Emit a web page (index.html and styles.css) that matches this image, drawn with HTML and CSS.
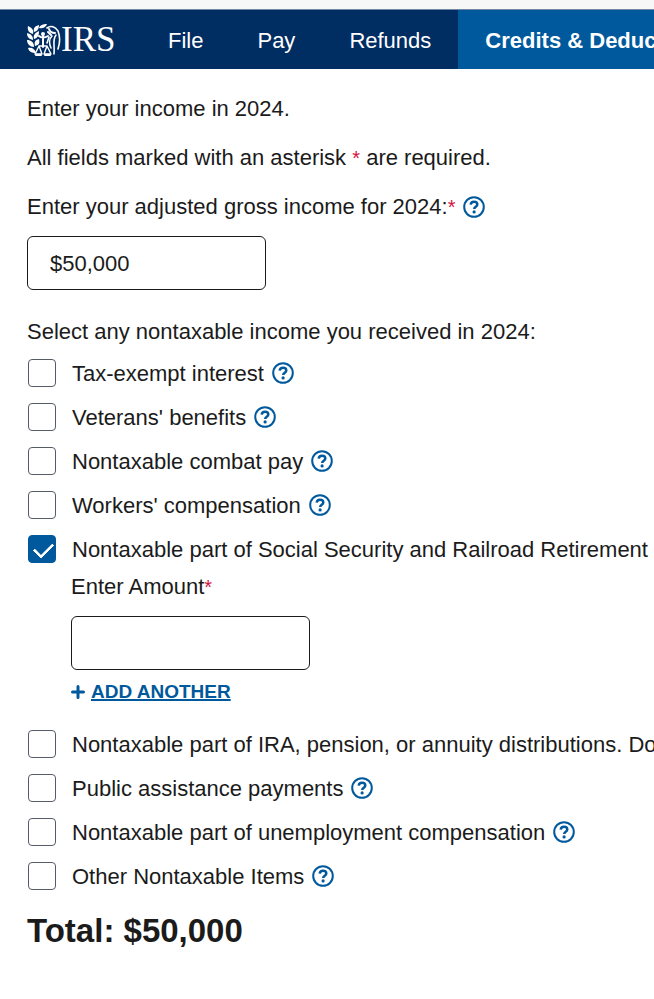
FILE: index.html
```
<!DOCTYPE html>
<html lang="en">
<head>
    <meta charset="UTF-8">
    <meta name="viewport" content="width=device-width, initial-scale=1.0">
    <title>Nontaxable income</title>
    <link rel="stylesheet" href="styles.css">
</head>
<body>
    <svg class="symbols" aria-hidden="true">
        <symbol id="help" viewBox="0 0 22 22">
            <circle cx="11" cy="11" r="9.8" fill="none" stroke="currentColor" stroke-width="2"/>
            <path d="M7.7 8.7C7.9 6.8 9.2 5.8 11 5.8c1.9 0 3.3 1 3.3 2.7 0 2.2-3.1 2.2-3.1 4.4" fill="none" stroke="currentColor" stroke-width="2.5"/>
            <circle cx="11.1" cy="15.9" r="1.6" fill="currentColor"/>
        </symbol>
    </svg>

    <nav class="navbar">
        <a class="logo" href="#" aria-label="IRS">
            <svg class="eagle" viewBox="0 0 34 32" fill="none" stroke="currentColor" stroke-linecap="round" stroke-linejoin="round">
                <!-- olive branch -->
                <g fill="currentColor" stroke="none">
                    <path d="M1 2c4 2 6 4 5 8C2 9 0 6 1 2z"/>
                    <path d="M0 9c4 1 6 3 6 7-4-1-6-3-6-7z"/>
                    <path d="M0 16c4 0 7 2 7 7-4 0-7-3-7-7z"/>
                    <path d="M1 24c4-1 7 1 8 5-4 0-7-1-8-5z"/>
                    <path d="M7 8c-1-4 1-6 5-7 0 3-1 6-5 7z"/>
                    <path d="M7 15c-1-4 1-6 5-8 0 4-1 7-5 8z"/>
                    <path d="M8 22c-1-4 0-6 4-7 1 4 0 6-4 7z"/>
                    <path d="M12 4c1-3 4-4 8-4-1 3-4 5-8 4z"/>
                </g>
                <!-- scales -->
                <path d="M16 11v12M12 12c2 2 6 2 9 0" stroke-width="2"/>
                <circle cx="16" cy="10" r="2" fill="currentColor" stroke="none"/>
                <path d="M12 22l-4 8h7l-3-8h8l-3 8h7l-4-8" stroke-width="1.4"/>
                <path d="M9 31h5M18 31h5" stroke-width="2"/>
                <!-- eagle head and wing -->
                <path d="M20 4c4-3 8-1 11 3 2 5 2 12 0 18" stroke-width="1.6"/>
                <path d="M22 5c1 3 3 4 6 4M21 8l3 3" stroke-width="2"/>
                <path d="M25 12c-3 3-3 8-1 12M29 11c-4 5-1 10-2 19M22 13l-2 6" stroke-width="1.6"/>
            </svg>
            <span class="logo-text">IRS</span>
        </a>
        <a class="nav-link" href="#">File</a>
        <a class="nav-link" href="#">Pay</a>
        <a class="nav-link" href="#">Refunds</a>
        <a class="nav-link active" href="#">Credits &amp; Deductions</a>
    </nav>

    <main class="content">
        <p class="text">Enter your income in 2024.</p>
        <p class="text">All fields marked with an asterisk <span class="required">*</span> are required.</p>

        <div class="field">
            <div class="field-label">
                <label for="agi">Enter your adjusted gross income for 2024:<span class="required">*</span></label>
                <button class="help" type="button" aria-label="Help"><svg><use href="#help"/></svg></button>
            </div>
            <input class="text-input" type="text" id="agi" value="$50,000">
        </div>

        <fieldset class="income">
            <legend>Select any nontaxable income you received in 2024:</legend>
            <div class="option">
                <input type="checkbox" id="interest">
                <label for="interest">Tax-exempt interest</label>
                <button class="help" type="button" aria-label="Help"><svg><use href="#help"/></svg></button>
            </div>
            <div class="option">
                <input type="checkbox" id="veterans">
                <label for="veterans">Veterans' benefits</label>
                <button class="help" type="button" aria-label="Help"><svg><use href="#help"/></svg></button>
            </div>
            <div class="option">
                <input type="checkbox" id="combat">
                <label for="combat">Nontaxable combat pay</label>
                <button class="help" type="button" aria-label="Help"><svg><use href="#help"/></svg></button>
            </div>
            <div class="option">
                <input type="checkbox" id="workers">
                <label for="workers">Workers' compensation</label>
                <button class="help" type="button" aria-label="Help"><svg><use href="#help"/></svg></button>
            </div>
            <div class="option">
                <input type="checkbox" id="social" checked>
                <label for="social">Nontaxable part of Social Security and Railroad Retirement benefits</label>
            </div>
            <div class="amount">
                <label for="amount">Enter Amount<span class="required">*</span></label>
                <input class="text-input" type="text" id="amount">
                <button class="add" type="button">
                    <svg class="plus" viewBox="0 0 14 14"><path d="M7 1.5v11M1.5 7h11" stroke="currentColor" stroke-width="3" stroke-linecap="round"/></svg>
                    <span>ADD ANOTHER</span>
                </button>
            </div>
            <div class="option">
                <input type="checkbox" id="ira">
                <label for="ira">Nontaxable part of IRA, pension, or annuity distributions. Do not</label>
            </div>
            <div class="option">
                <input type="checkbox" id="assistance">
                <label for="assistance">Public assistance payments</label>
                <button class="help" type="button" aria-label="Help"><svg><use href="#help"/></svg></button>
            </div>
            <div class="option">
                <input type="checkbox" id="unemployment">
                <label for="unemployment">Nontaxable part of unemployment compensation</label>
                <button class="help" type="button" aria-label="Help"><svg><use href="#help"/></svg></button>
            </div>
            <div class="option">
                <input type="checkbox" id="other">
                <label for="other">Other Nontaxable Items</label>
                <button class="help" type="button" aria-label="Help"><svg><use href="#help"/></svg></button>
            </div>
        </fieldset>

        <h2 class="total">Total: $50,000</h2>
    </main>
</body>
</html>
```
FILE: styles.css
```
* {
    box-sizing: border-box;
}

body {
    margin: 0;
    background: #fff;
    color: #1b1b1b;
    font-family: "Liberation Sans", Arial, sans-serif;
    font-size: 22px;
    line-height: 28px;
    white-space: nowrap;
    overflow-x: hidden;
    border-top: 9px solid #f7f7f7;
}

.symbols {
    display: none;
}

.navbar {
    display: flex;
    height: 60px;
    background: #002d62;
    border-top: 1px solid #7487a2;
    overflow: hidden;
}

.logo {
    display: flex;
    align-items: center;
    flex-shrink: 0;
    width: 141px;
    padding-left: 27px;
    color: #fff;
    text-decoration: none;
}

.eagle {
    width: 34px;
    height: 32px;
}

.logo-text {
    font-family: "Liberation Serif", "Times New Roman", serif;
    font-size: 35px;
}

.nav-link {
    flex-shrink: 0;
    display: flex;
    align-items: center;
    padding: 2px 27px 0;
    color: #fff;
    text-decoration: none;
}

.nav-link.active {
    background: #00599c;
    font-weight: bold;
}

.content {
    padding: 26px 27px;
}

.text {
    margin: 0 0 21px;
}

.required {
    color: #d8123f;
    font-size: 20px;
    line-height: 20px;
}

.field-label {
    display: flex;
    align-items: center;
    gap: 8px;
    margin-bottom: 15px;
}

.text-input {
    display: block;
    width: 239px;
    height: 54px;
    padding: 2px 22px 0;
    border: 1px solid #1b1b1b;
    border-radius: 6px;
    background: #fff;
    color: #1b1b1b;
    font: inherit;
}

.help {
    width: 22px;
    height: 22px;
    padding: 0;
    border: none;
    background: none;
    color: #00599c;
    cursor: pointer;
}

.help svg {
    display: block;
    width: 22px;
    height: 22px;
}

.income {
    margin: 28px 0 13px;
    padding: 0;
    border: none;
}

.income legend {
    padding: 0;
    margin-bottom: 5px;
}

.option {
    display: flex;
    align-items: center;
    height: 44px;
    padding-left: 1px;
}

.option label {
    margin: 0 8px 0 16px;
    padding-top: 2px;
}

.option input {
    appearance: none;
    flex-shrink: 0;
    width: 28px;
    height: 28px;
    margin: 0;
    border: 1px solid #565c65;
    border-radius: 4px;
    background: #fff;
}

.option input:checked {
    border-color: #00599c;
    background: #00599c;
}

.option input:checked::before {
    content: "";
    display: block;
    width: 16px;
    height: 9px;
    margin: 6px 5px;
    border-left: 3px solid #fff;
    border-bottom: 3px solid #fff;
    border-radius: 1px;
    transform: rotate(-45deg);
}

.amount {
    padding: 2px 0 16px 44px;
}

.amount label {
    display: block;
    margin-bottom: 15px;
}

.add {
    display: flex;
    align-items: center;
    gap: 6px;
    margin-top: 8px;
    padding: 0;
    border: none;
    background: none;
    color: #00599c;
    font: inherit;
    font-size: 19px;
    font-weight: bold;
    text-decoration: underline;
    text-decoration-thickness: 2px;
    cursor: pointer;
}

.plus {
    width: 14px;
    height: 14px;
}

.total {
    margin: 0;
    font-size: 33px;
    line-height: 40px;
}
```
